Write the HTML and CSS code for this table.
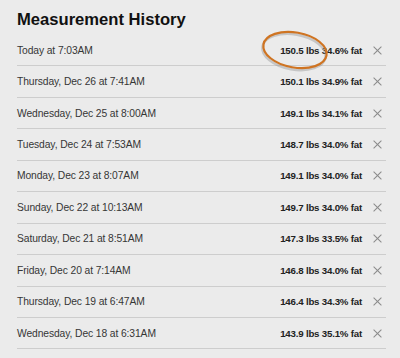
FILE: index.html
```html
<!DOCTYPE html>
<html>
<head>
<meta charset="utf-8">
<link rel="stylesheet" href="styles.css">
</head>
<body>
<div class="page">
  <h1 class="title">Measurement History</h1>
  <ul class="list">
    <li class="row"><span class="date">Today at 7:03AM</span><span class="vals"><b>150.5 lbs 34.6% fat</b><span class="x"></span></span></li>
    <li class="row"><span class="date">Thursday, Dec 26 at 7:41AM</span><span class="vals"><b>150.1 lbs 34.9% fat</b><span class="x"></span></span></li>
    <li class="row"><span class="date">Wednesday, Dec 25 at 8:00AM</span><span class="vals"><b>149.1 lbs 34.1% fat</b><span class="x"></span></span></li>
    <li class="row"><span class="date">Tuesday, Dec 24 at 7:53AM</span><span class="vals"><b>148.7 lbs 34.0% fat</b><span class="x"></span></span></li>
    <li class="row"><span class="date">Monday, Dec 23 at 8:07AM</span><span class="vals"><b>149.1 lbs 34.0% fat</b><span class="x"></span></span></li>
    <li class="row"><span class="date">Sunday, Dec 22 at 10:13AM</span><span class="vals"><b>149.7 lbs 34.0% fat</b><span class="x"></span></span></li>
    <li class="row"><span class="date">Saturday, Dec 21 at 8:51AM</span><span class="vals"><b>147.3 lbs 33.5% fat</b><span class="x"></span></span></li>
    <li class="row"><span class="date">Friday, Dec 20 at 7:14AM</span><span class="vals"><b>146.8 lbs 34.0% fat</b><span class="x"></span></span></li>
    <li class="row"><span class="date">Thursday, Dec 19 at 6:47AM</span><span class="vals"><b>146.4 lbs 34.3% fat</b><span class="x"></span></span></li>
    <li class="row"><span class="date">Wednesday, Dec 18 at 6:31AM</span><span class="vals"><b>143.9 lbs 35.1% fat</b><span class="x"></span></span></li>
  </ul>
  <svg class="circle" width="80" height="50" viewBox="0 0 80 50">
    <ellipse cx="39" cy="25" rx="32" ry="17.5" fill="none" stroke="#8f8f8f" stroke-opacity="0.4" stroke-width="2.5" style="transform: translate(-1px,2px) rotate(10deg); transform-origin: 39px 25px;"/>
    <ellipse cx="39" cy="25" rx="32" ry="17.5" fill="none" stroke="#cf7422" stroke-width="2.2" style="transform: rotate(10deg); transform-origin: 39px 25px;"/>
  </svg>
</div>
</body>
</html>
```

FILE: styles.css
```css
html, body {
  margin: 0;
  padding: 0;
  background: #ebebeb;
}
.page {
  position: relative;
  width: 400px;
  height: 358px;
  padding: 10px 14px 0 17px;
  box-sizing: border-box;
  font-family: "Liberation Sans", Arial, sans-serif;
}
.title {
  margin: 0 0 5px 0;
  font-size: 16.6px;
  line-height: 20px;
  font-weight: bold;
  color: #111;
}
.list {
  list-style: none;
  margin: 0;
  padding: 0;
}
.row {
  display: flex;
  align-items: center;
  justify-content: space-between;
  height: 31.44px;
  box-sizing: border-box;
  border-bottom: 1px solid #cdcdcd;
  padding: 0 5px 0 0;
}
.date {
  font-size: 10.3px;
  letter-spacing: -0.1px;
  color: #363636;
}
.vals {
  display: flex;
  align-items: center;
  gap: 11px;
}
.vals b {
  font-size: 9.7px;
  letter-spacing: -0.2px;
  color: #222;
}
.x {
  position: relative;
  width: 8px;
  height: 8px;
}
.x::before, .x::after {
  content: "";
  position: absolute;
  left: -1.5px;
  top: 3.5px;
  width: 11px;
  height: 1px;
  background: #8a8a8a;
  transform: rotate(45deg);
}
.x::after {
  transform: rotate(-45deg);
}
.circle {
  position: absolute;
  left: 256px;
  top: 25px;
}
```
